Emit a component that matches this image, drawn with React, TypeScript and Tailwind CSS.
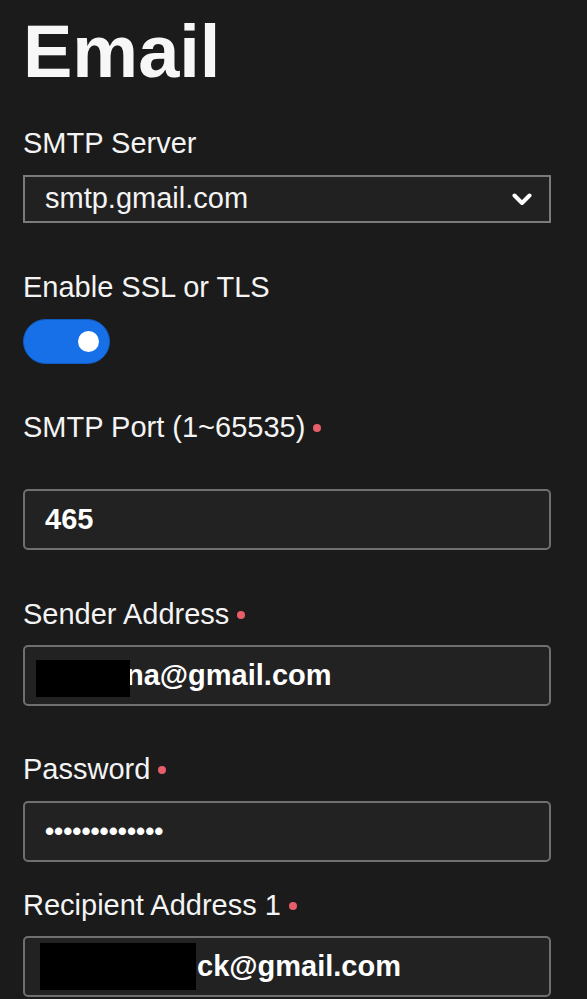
import React, { useState } from 'react';

const font = { fontFamily: '"Liberation Sans", Arial, sans-serif' };

const Label = ({ text, required, className = '' }: { text: string; required?: boolean; className?: string }) => (
  <div className={`flex items-center h-[30px] text-[29px] leading-[30px] text-[#f4f4f4] ${className}`}>
    <span>{text}</span>
    {required && <span className="ml-[8px] mt-[2px] w-[8px] h-[8px] rounded-full bg-[#e85d6a]" />}
  </div>
);

const Field = ({ children, className = '' }: { children: React.ReactNode; className?: string }) => (
  <div
    className={`relative flex items-center w-[528px] h-[61px] rounded-[5px] border-2 border-[#6f6f6f] bg-[#222222] text-[29px] font-bold text-white ${className}`}
  >
    {children}
  </div>
);

export default function App() {
  const [ssl, setSsl] = useState(true);

  return (
    <div className="min-h-screen bg-[#1b1b1b] px-[23px] pt-[15px] pb-4" style={font}>
      <h1 className="text-[74px] leading-none font-bold text-[#f7f7f7]">Email</h1>

      {/* SMTP server */}
      <Label text="SMTP Server" className="mt-[39px]" />
      <div className="mt-[17px] flex items-center justify-between w-[528px] h-[48px] border-2 border-[#7a7a7a] bg-[#212121] pl-[20px] pr-[17px] text-[29px] text-[#f4f4f4]">
        <span>smtp.gmail.com</span>
        <svg width="20" height="13" viewBox="0 0 20 13" fill="none">
          <path d="M2.5 2.5 L10 10 L17.5 2.5" stroke="white" strokeWidth="4" strokeLinecap="round" strokeLinejoin="round" />
        </svg>
      </div>

      {/* SSL toggle */}
      <Label text="Enable SSL or TLS" className="mt-[49px]" />
      <button
        onClick={() => setSsl(!ssl)}
        className={`mt-[17px] flex items-center w-[87px] h-[45px] rounded-full border border-[#0f5cc4] ${
          ssl ? 'bg-[#1770e8] justify-end' : 'bg-[#444] justify-start'
        } px-[10px]`}
      >
        <span className="w-[21px] h-[21px] rounded-full bg-white" />
      </button>

      {/* Port */}
      <Label text="SMTP Port (1~65535)" required className="mt-[48px]" />
      <Field className="mt-[47px] h-[60px] pl-[20px]">465</Field>

      {/* Sender */}
      <Label text="Sender Address" required className="mt-[49px]" />
      <Field className="mt-[16px] pl-[101px]">
        <div className="absolute left-[11px] top-[13px] w-[94px] h-[37px] bg-black" />
        <span>na@gmail.com</span>
      </Field>

      {/* Password */}
      <Label text="Password" required className="mt-[48px]" />
      <Field className="mt-[17px] h-[60px] pl-[20px]">
        <span className="text-[26px]">•••••••••••••</span>
      </Field>

      {/* Recipient */}
      <Label text="Recipient Address 1" required className="mt-[28px]" />
      <Field className="mt-[16px] pl-[172px]">
        <div className="absolute left-[15px] top-[5px] w-[156px] h-[47px] bg-black" />
        <span>ck@gmail.com</span>
      </Field>
    </div>
  );
}
